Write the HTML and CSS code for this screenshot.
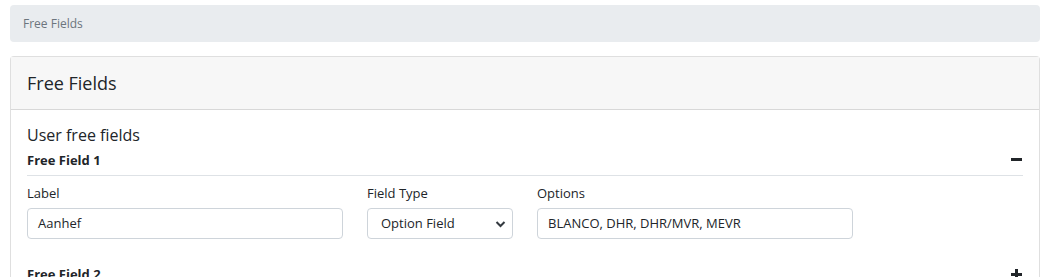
FILE: index.html
```html
<!DOCTYPE html>
<html>
<head>
<meta charset="utf-8">
<link rel="stylesheet" href="styles.css">
</head>
<body>
<div class="page">
  <nav class="breadcrumb">Free Fields</nav>
  <div class="card">
    <div class="card-header"><h5>Free Fields</h5></div>
    <div class="card-body">
      <h6 class="section-title">User free fields</h6>
      <div class="field-head">
        <span>Free Field 1</span>
        <svg class="toggle" width="11" height="11" viewBox="0 0 11 11"><rect x="0" y="4" width="11" height="3" fill="#212529"/></svg>
      </div>
      <div class="row">
        <div class="col col-4">
          <label>Label</label>
          <div class="input">Aanhef</div>
        </div>
        <div class="col col-2">
          <label>Field Type</label>
          <div class="input select">Option Field
            <svg class="chev" width="11" height="8" viewBox="0 0 11 8"><path d="M1.5 2l4 4 4-4" fill="none" stroke="#343a40" stroke-width="2"/></svg>
          </div>
        </div>
        <div class="col col-4">
          <label>Options</label>
          <div class="input">BLANCO, DHR, DHR/MVR, MEVR</div>
        </div>
      </div>
      <div class="field-head second">
        <span>Free Field 2</span>
        <svg class="toggle" width="11" height="11" viewBox="0 0 11 11"><rect x="0" y="4" width="11" height="3" fill="#212529"/><rect x="4" y="0" width="3" height="11" fill="#212529"/></svg>
      </div>
    </div>
  </div>
</div>
</body>
</html>
```

FILE: styles.css
```css
* { box-sizing: border-box; }
html, body { margin: 0; padding: 0; background: #fff; }
body {
  font-family: "Open Sans", "Noto Sans", sans-serif;
  color: #212529;
  font-size: 13px;
}
.page { padding: 5px 3px 0 10px; }
.breadcrumb {
  background: #e9ecef;
  border-radius: 4px;
  height: 37px;
  line-height: 37px;
  padding: 0 13px;
  font-size: 12px;
  color: #6c757d;
  margin-bottom: 14px;
}
.card {
  border: 1px solid rgba(0,0,0,0.125);
  border-radius: 4px;
  border-bottom: none;
}
.card-header {
  background: #f7f7f7;
  border-bottom: 1px solid rgba(0,0,0,0.125);
  height: 53px;
  padding: 0 16px;
  display: flex;
  align-items: center;
}
.card-header h5 {
  margin: 0;
  font-size: 18px;
  font-weight: 500;
}
.card-body { padding: 16px 16px 0 16px; }
.section-title {
  margin: 0 0 4px 0;
  font-size: 16px;
  font-weight: 500;
  line-height: 18px;
}
.field-head {
  display: flex;
  justify-content: space-between;
  align-items: center;
  font-weight: 700;
  font-size: 13px;
  height: 28px;
  border-bottom: 1px solid #dee2e6;
  padding-bottom: 4px;
}
.field-head .toggle { margin-right: 1px; }
.field-head.second { border-bottom: none; margin-top: 23px; }
.row {
  display: flex;
  margin: 0 -12px;
  padding-top: 9px;
}
.col { padding: 0 12px; }
.col-4 { width: 340px; }
.col-2 { width: 170px; }
label {
  display: block;
  font-size: 13px;
  line-height: 17px;
  margin-bottom: 6px;
}
.input {
  height: 31px;
  border: 1px solid #ced4da;
  border-radius: 4px;
  padding: 0 10px;
  line-height: 29px;
  font-size: 13px;
  color: #212529;
  position: relative;
}
.select { padding-left: 13px; }
.chev { position: absolute; right: 6px; top: 11px; }
```
